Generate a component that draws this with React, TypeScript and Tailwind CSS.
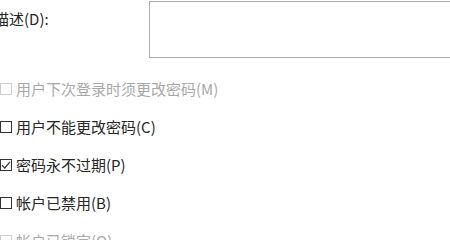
import React from 'react';

const font = { fontFamily: '"Noto Sans CJK SC", "Noto Sans", sans-serif' };

function Check({ label, checked, disabled }: { label: string; checked?: boolean; disabled?: boolean }) {
    return (
        <div className="h-[38px] flex items-center">
            <span
                className={
                    'w-[12px] h-[12px] border flex items-center justify-center bg-white ' +
                    (disabled ? 'border-[#cfcfcf]' : 'border-[#333333]')
                }
            >
                {checked && (
                    <svg width="10" height="10" viewBox="0 0 10 10">
                        <path d="M1 5.2 L3.8 8 L9 1.8" fill="none" stroke="#333" strokeWidth="1.2" />
                    </svg>
                )}
            </span>
            <span className={'ml-[4px] text-[15px] ' + (disabled ? 'text-[#a8a8a8]' : 'text-[#262626]')}>{label}</span>
        </div>
    );
}

export default function App() {
    return (
        <div className="w-[450px] h-[240px] overflow-hidden bg-white" style={font}>
            <div className="flex h-[57px] mt-[1px]">
                <div className="w-[155px] -ml-[6px] pt-[7px] text-[15px] text-[#262626]">描述(D):</div>
                <div className="flex-1 border border-[#adadad] -mr-[4px]"></div>
            </div>
            <div className="mt-[12px]">
                <Check label="用户下次登录时须更改密码(M)" disabled />
                <Check label="用户不能更改密码(C)" />
                <Check label="密码永不过期(P)" checked />
                <Check label="帐户已禁用(B)" />
                <Check label="帐户已锁定(O)" disabled />
            </div>
        </div>
    );
}
